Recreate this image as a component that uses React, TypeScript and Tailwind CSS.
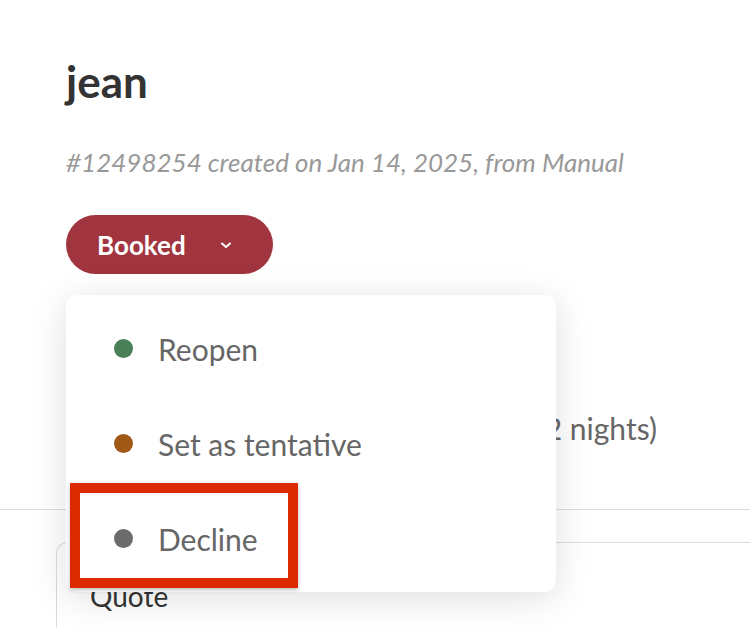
import React from "react";

const items = [
  { label: "Reopen", color: "bg-[#4a7f57]" },
  { label: "Set as tentative", color: "bg-[#a05816]" },
  { label: "Decline", color: "bg-[#6b6b6b]" },
];

export default function App() {
  return (
    <div className="relative w-[750px] h-[628px] overflow-hidden bg-white font-['Lato',sans-serif]">
      <div className="pl-[66px] pt-[59px]">
        <h1 className="text-[44px] leading-none font-bold text-[#333]">jean</h1>
        <p className="mt-[46px] text-[26px] leading-none italic text-[#999]">
          #12498254 created on Jan 14, 2025, from Manual
        </p>
        <button className="mt-[40px] flex h-[59px] w-[207px] items-center rounded-full bg-[#a1353f] pl-[31px] text-white">
          <span className="text-[26px] font-bold leading-none">Booked</span>
          <svg className="ml-[33px]" width="14" height="10" viewBox="0 0 14 10" fill="none">
            <path d="M3 3.5 L7 7 L11 3.5" stroke="white" strokeWidth="2" strokeLinecap="round" strokeLinejoin="round" />
          </svg>
        </button>
        <div className="mt-[139px] flex w-[591px] justify-end text-[30px] leading-none text-[#666]">
          (2 nights)
        </div>
      </div>
      <div className="mt-[66px] border-t border-[#dcdcdc]" />
      <div className="ml-[56px] mt-[32px] h-[120px] rounded-tl-[12px] border-l border-t border-[#dcdcdc] pl-[33px] pt-[39px]">
        <div className="text-[28px] leading-none text-[#333]">Quote</div>
      </div>

      <div className="absolute left-[66px] top-[295px] w-[490px] rounded-[12px] bg-white py-[6px] shadow-[0_6px_36px_rgba(0,0,0,0.13)]">
        {items.map((it) => (
          <div key={it.label} className="flex h-[95px] items-center pl-[48px]">
            <span className={`h-[19px] w-[19px] rounded-full ${it.color}`} />
            <span className="ml-[25px] text-[30px] leading-none text-[#666]">{it.label}</span>
          </div>
        ))}
      </div>

      <div className="absolute left-[70px] top-[483px] h-[105px] w-[228px] border-[10px] border-[#dc2a00] shadow-[0_2px_4px_rgba(0,0,0,0.25)]" />
    </div>
  );
}
